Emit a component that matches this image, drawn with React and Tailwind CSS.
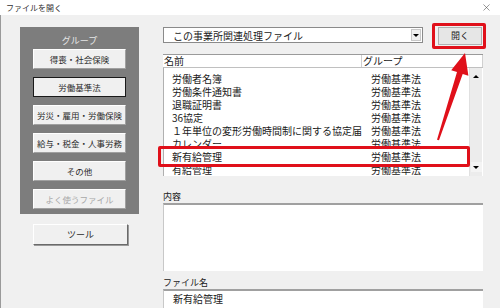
import { X } from "lucide-react";

const groups = [
  { label: "得喪・社会保険" },
  { label: "労働基準法", focused: true },
  { label: "労災・雇用・労働保険" },
  { label: "給与・税金・人事労務" },
  { label: "その他" },
  { label: "よく使うファイル", disabled: true },
];

const files = [
  "労働者名簿",
  "労働条件通知書",
  "退職証明書",
  "36協定",
  "１年単位の変形労働時間制に関する協定届",
  "カレンダー",
  "新有給管理",
  "有給管理",
];

const jp = { fontFamily: '"Noto Sans CJK JP", "Noto Sans", sans-serif' };

function GroupButton({ label, focused, disabled }) {
  return (
    <div
      className={`h-[20px] flex items-center justify-center whitespace-nowrap bg-[#f0f0f0] text-[8.5px] border ${
        focused
          ? "border-[#1a1a1a]"
          : "border-t-white border-l-white border-r-[#a0a0a0] border-b-[#a0a0a0]"
      } ${disabled ? "text-[#a8a8a8]" : "text-[#2a2a2a]"}`}
    >
      {label}
    </div>
  );
}

export default function App() {
  return (
    <div className="relative w-[500px] h-[308px] overflow-hidden bg-[#f0f0f0]" style={jp}>
      {/* title bar */}
      <div className="h-[15px] bg-white flex items-center justify-between pl-[6px] pr-[8px]">
        <span className="text-[8px] leading-none text-[#333]">ファイルを開く</span>
        <X size={11} strokeWidth={1.2} className="text-[#444]" />
      </div>

      <div className="flex pl-[19px] pt-[12px] border-l border-[#9a9a9a] h-[293px]">
        {/* left column */}
        <div className="w-[119px] flex flex-col">
          <div className="bg-[#7d7d7d] h-[187px] px-[13px] pt-[7px]">
            <div className="h-[13px] leading-[13px] text-center text-[9px] text-[#e6e6e6]">グループ</div>
            <div className="mt-[2px] flex flex-col gap-[8px]">
              {groups.map((g) => (
                <GroupButton key={g.label} {...g} />
              ))}
            </div>
          </div>
          <div className="mt-[10px] ml-[13px] w-[95px] h-[21px] flex items-center justify-center bg-[#f0f0f0] text-[9px] text-[#2a2a2a] border border-t-white border-l-white border-r-[#6a6a6a] border-b-[#6a6a6a] shadow-[1px_1px_0_#9a9a9a]">
            ツール
          </div>
        </div>

        {/* right column */}
        <div className="ml-[24px] w-[320px] flex flex-col">
          <div className="flex items-start">
            <div className="w-[260px] h-[16px] bg-white border border-[#8a8a8a] flex items-center pl-[9px] pr-[1px] text-[10px] text-[#1a1a1a]">
              <span className="flex-1">この事業所関連処理ファイル</span>
              <div className="w-[10px] h-[12px] bg-[#f0f0f0] border border-[#c8c8c8] flex items-center justify-center">
                <div className="w-0 h-0 border-l-[3px] border-r-[3px] border-t-[3px] border-l-transparent border-r-transparent border-t-black" />
              </div>
            </div>
            <div className="ml-[15px] w-[44px] h-[18px] bg-[#e6e6e6] border border-[#b0b0b0] flex items-center justify-center text-[9px] text-[#1a1a1a]">
              開く
            </div>
          </div>

          {/* list view */}
          <div className="mt-[9px] flex h-[13px] bg-white border-t border-[#9a9a9a] text-[10px] leading-[12px] text-[#1a1a1a]">
            <div className="w-[199px] pl-[1px] border-r border-[#d0d0d0]">名前</div>
            <div className="flex-1 pl-[1px] border-r border-[#d0d0d0]">グループ</div>
          </div>
          <div className="h-[109px] bg-white border-t border-[#c0c0c0] border-l border-l-[#b0b0b0] flex">
            <div className="flex-1 pt-[4px] overflow-hidden text-[10px] leading-[13px] text-[#1a1a1a]">
              {files.map((f) => (
                <div key={f} className="flex whitespace-nowrap">
                  <span className="w-[207px] pl-[8px]">{f}</span>
                  <span>労働基準法</span>
                </div>
              ))}
            </div>
            <div className="w-[13px] mr-[1px] bg-[#ececec] border-l border-[#e0e0e0] flex flex-col justify-between items-center pt-[7px] pb-[4px]">
              <div className="w-0 h-0 border-l-[3px] border-r-[3px] border-b-[3px] border-l-transparent border-r-transparent border-b-black" />
              <div className="w-[11px] h-[10px] bg-[#f4f4f4] flex items-center justify-center">
                <div className="w-0 h-0 border-l-[3px] border-r-[3px] border-t-[3px] border-l-transparent border-r-transparent border-t-black" />
              </div>
            </div>
          </div>

          <div className="mt-[14px] h-[13px] text-[9px] leading-[13px] text-[#1a1a1a]">内容</div>
          <div className="h-[70px] bg-white border-t-2 border-[#a0a0a0] border-l border-l-[#c8c8c8]" />

          <div className="mt-[6px] h-[12px] text-[9px] leading-[12px] text-[#1a1a1a]">ファイル名</div>
          <div className="h-[20px] bg-white border-t-2 border-[#a0a0a0] border-l border-l-[#c8c8c8] pl-[9px] text-[10px] leading-[15px] text-[#1a1a1a]">
            新有給管理
          </div>
        </div>
      </div>

      {/* annotations */}
      <div className="absolute left-[432px] top-[23px] w-[54px] h-[26px] border-[3px] border-[#e0101a] rounded-[2px]" />
      <div className="absolute left-[158px] top-[146px] w-[312px] h-[21px] border-[3px] border-[#e0101a] rounded-[2px]" />
      <svg className="absolute inset-0" width="500" height="308" viewBox="0 0 500 308">
        <polygon
          points="437,139.7 457,72.1 451.2,70.2 465,53 468.4,75.8 462.7,73.9 439,140.3"
          fill="#e0101a"
        />
      </svg>
    </div>
  );
}
